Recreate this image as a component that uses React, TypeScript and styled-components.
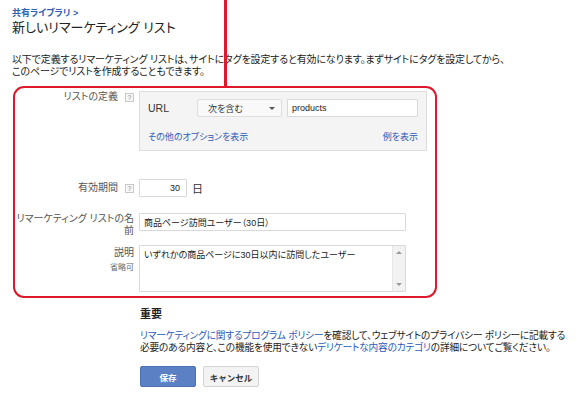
import React from 'react'
import styled, { createGlobalStyle } from 'styled-components'

const GlobalStyle = createGlobalStyle`
  html, body {
    margin: 0;
    padding: 0;
    background: #fff;
    overflow: hidden;
  }
  body {
    font-family: "Liberation Sans", "Noto Sans CJK JP", sans-serif;
    font-feature-settings: "palt" 1;
    color: #222;
  }
`

const Page = styled.div`
  position: relative;
  box-sizing: border-box;
  width: 580px;
  height: 393px;
  padding: 7px 0 0 12px;
  overflow: hidden;
`

// annotation line dropped from the top of the shot onto the red frame
const Marker = styled.div`
  position: absolute;
  left: 224px;
  top: 0;
  width: 3px;
  height: 88px;
  background: #dc1a2c;
`

const Breadcrumb = styled.a`
  display: block;
  font-size: 9px;
  font-weight: bold;
  line-height: 12px;
  color: #2f5fb3;
  text-decoration: none;
`

const Title = styled.h1`
  margin: 1px 0 0;
  font-size: 13px;
  font-weight: normal;
  line-height: 16px;
  color: #222;
`

const Intro = styled.p`
  margin: 18px 0 0;
  font-size: 10px;
  letter-spacing: -0.15px;
  line-height: 11.5px;
  color: #222;
  white-space: nowrap;
`

const Frame = styled.div`
  box-sizing: border-box;
  width: 424px;
  height: 212px;
  margin: 9px 0 0 1px;
  padding-top: 3px;
  border: 2px solid #dc1a2c;
  border-radius: 11px;
`

const Row = styled.div<{ $gap?: number; $center?: boolean }>`
  display: grid;
  grid-template-columns: 119px 1fr;
  column-gap: 5px;
  align-items: ${(p) => (p.$center ? 'center' : 'start')};
  margin-top: ${(p) => p.$gap ?? 0}px;
`

const Label = styled.div<{ $pad?: number }>`
  display: flex;
  flex-direction: column;
  align-items: flex-end;
  padding-top: ${(p) => p.$pad ?? 0}px;
  font-size: 10px;
  line-height: 12px;
  color: #555;
  text-align: right;
`

const LabelLine = styled.span`
  display: flex;
  align-items: center;
`

const Optional = styled.span`
  margin-top: 4px;
  font-size: 8px;
  line-height: 10px;
  color: #666;
`

const Help = styled.span`
  display: inline-flex;
  align-items: center;
  justify-content: center;
  box-sizing: border-box;
  width: 9px;
  height: 9px;
  margin-left: 7px;
  border: 1px solid #c9c9c9;
  background: #f7f7f7;
  font-size: 7px;
  line-height: 7px;
  color: #888;
`

const Panel = styled.div`
  box-sizing: border-box;
  width: 288px;
  padding: 7px 8px;
  background: #f4f4f4;
  border: 1px solid #dcdcdc;
`

const RuleRow = styled.div`
  display: flex;
  align-items: center;
  height: 18px;
`

const RuleName = styled.span`
  width: 49px;
  font-size: 10.5px;
  color: #333;
`

const Select = styled.div`
  box-sizing: border-box;
  display: flex;
  align-items: center;
  justify-content: space-between;
  width: 85px;
  height: 18px;
  padding: 0 6px 0 10px;
  background: #f9f9f9;
  border: 1px solid #dedede;
  border-radius: 2px;
  font-size: 9px;
  color: #333;
`

const Caret = styled.span`
  width: 0;
  height: 0;
  border-left: 3px solid transparent;
  border-right: 3px solid transparent;
  border-top: 3px solid #555;
`

const TextBox = styled.div<{ $width: number; $align?: string }>`
  box-sizing: border-box;
  display: flex;
  align-items: center;
  justify-content: ${(p) => p.$align ?? 'flex-start'};
  width: ${(p) => p.$width}px;
  height: 18px;
  padding: 0 6px 0 4px;
  background: #fff;
  border: 1px solid #d9d9d9;
  border-radius: 1px;
  font-size: 9px;
  color: #222;
`

const RuleInput = styled(TextBox)`
  margin-left: 5px;
`

const PanelLinks = styled.div`
  display: flex;
  justify-content: space-between;
  margin-top: 14px;
  font-size: 9px;
  line-height: 12px;
`

const Link = styled.a`
  color: #2b5cb8;
  text-decoration: none;
`

const Inline = styled.div`
  display: flex;
  align-items: center;
`

const Unit = styled.span`
  margin-left: 5px;
  font-size: 11px;
  color: #333;
`

const TextArea = styled.div`
  box-sizing: border-box;
  display: flex;
  width: 267px;
  height: 47px;
  background: #fff;
  border: 1px solid #d9d9d9;
  border-radius: 1px;
`

const TextAreaBody = styled.div`
  flex: 1;
  padding: 3px 4px;
  font-size: 9px;
  line-height: 12px;
  color: #222;
`

const Scrollbar = styled.div`
  display: flex;
  flex-direction: column;
  justify-content: space-between;
  align-items: center;
  width: 12px;
  padding: 5px 0;
  background: #f2f2f2;
  border-left: 1px solid #e6e6e6;
`

const Arrow = styled.span<{ $up?: boolean }>`
  width: 0;
  height: 0;
  border-left: 3px solid transparent;
  border-right: 3px solid transparent;
  ${(p) => (p.$up ? 'border-bottom: 3px solid #999;' : 'border-top: 3px solid #999;')}
`

const Notice = styled.section`
  margin: 9px 0 0 128px;
`

const NoticeTitle = styled.h2`
  margin: 0;
  font-size: 11px;
  font-weight: bold;
  line-height: 14px;
  color: #222;
`

const NoticeText = styled.p`
  margin: 9px 0 0;
  font-size: 9.7px;
  letter-spacing: -0.18px;
  line-height: 11.5px;
  color: #222;
  white-space: nowrap;
`

const Buttons = styled.div`
  display: flex;
  gap: 7px;
  margin-top: 13px;
`

const Button = styled.button<{ $primary?: boolean }>`
  box-sizing: border-box;
  width: 56px;
  height: 21px;
  padding: 0;
  border-radius: 2px;
  border: 1px solid ${(p) => (p.$primary ? '#4a6fb5' : '#d3d3d3')};
  background: ${(p) => (p.$primary ? '#5b80c4' : '#f3f3f3')};
  color: ${(p) => (p.$primary ? '#fff' : '#333')};
  font-family: inherit;
  font-size: 8.5px;
  font-weight: bold;
`

export default function App() {
  return (
    <Page>
      <GlobalStyle />
      <Marker />
      <Breadcrumb>共有ライブラリ &gt;</Breadcrumb>
      <Title>新しいリマーケティング リスト</Title>
      <Intro>
        以下で定義するリマーケティング リストは、サイトにタグを設定すると有効になります。まずサイトにタグを設定してから、
        <br />
        このページでリストを作成することもできます。
      </Intro>

      <Frame>
        <Row>
          <Label>
            <LabelLine>
              リストの定義<Help>?</Help>
            </LabelLine>
          </Label>
          <Panel>
            <RuleRow>
              <RuleName>URL</RuleName>
              <Select>
                次を含む
                <Caret />
              </Select>
              <RuleInput $width={131}>products</RuleInput>
            </RuleRow>
            <PanelLinks>
              <Link>その他のオプションを表示</Link>
              <Link>例を表示</Link>
            </PanelLinks>
          </Panel>
        </Row>

        <Row $gap={28} $center>
          <Label>
            <LabelLine>
              有効期間<Help>?</Help>
            </LabelLine>
          </Label>
          <Inline>
            <TextBox $width={48} $align="flex-end">30</TextBox>
            <Unit>日</Unit>
          </Inline>
        </Row>

        <Row $gap={16}>
          <Label>
            <span>リマーケティング リストの名</span>
            <span>前</span>
          </Label>
          <TextBox $width={267}>商品ページ訪問ユーザー（30日）</TextBox>
        </Row>

        <Row $gap={8}>
          <Label $pad={2}>
            <span>説明</span>
            <Optional>省略可</Optional>
          </Label>
          <TextArea>
            <TextAreaBody>いずれかの商品ページに30日以内に訪問したユーザー</TextAreaBody>
            <Scrollbar>
              <Arrow $up />
              <Arrow />
            </Scrollbar>
          </TextArea>
        </Row>
      </Frame>

      <Notice>
        <NoticeTitle>重要</NoticeTitle>
        <NoticeText>
          <Link>リマーケティングに関するプログラム ポリシー</Link>
          を確認して、ウェブサイトのプライバシー ポリシーに記載する
          <br />
          必要のある内容と、この機能を使用できない<Link>デリケートな内容のカテゴリ</Link>
          の詳細についてご覧ください。
        </NoticeText>
        <Buttons>
          <Button $primary>保存</Button>
          <Button>キャンセル</Button>
        </Buttons>
      </Notice>
    </Page>
  )
}
